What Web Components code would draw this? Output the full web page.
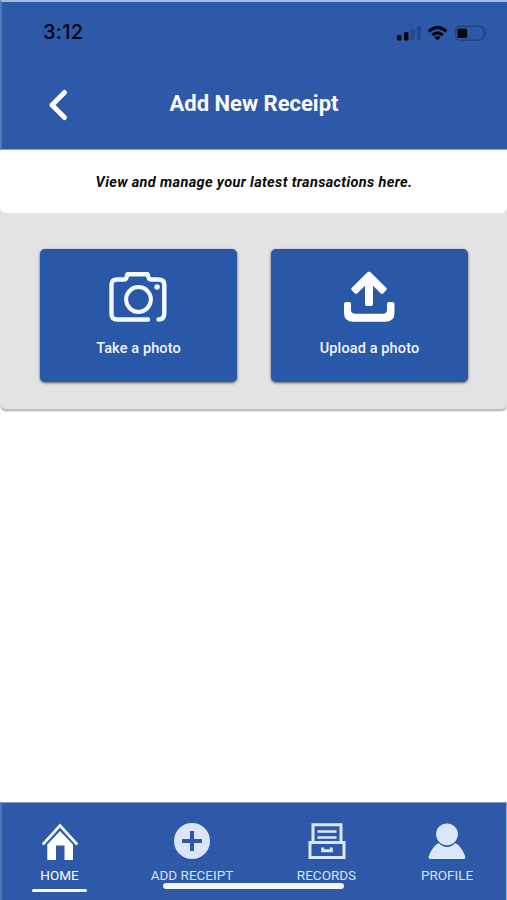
<!DOCTYPE html>
<html lang="en">
<head>
<meta charset="UTF-8">
<meta name="viewport" content="width=device-width, initial-scale=1.0">
<title>Add New Receipt</title>
<style>
  body {
    margin: 0;
    background: white;
    font-family: Roboto, "Liberation Sans", sans-serif;
    --blue: #2e58a8;
    --card-blue: #2a58a9;
  }
</style>
</head>
<body>
<receipt-app></receipt-app>

<script>
class StatusBar extends HTMLElement {
  constructor() {
    super();
    this.attachShadow({mode: 'open'});
    this.shadowRoot.innerHTML = `
      <style>
      :host{
        display:flex;
        justify-content:space-between;
        height:58px;
        box-sizing:border-box;
        padding:18px 19px 0 41px;
        color:#05070e;
      }
      .time{
        font-family:Inter, sans-serif;
        font-size:20px;
        line-height:24px;
        font-weight:500;
        letter-spacing:0.3px;
      }
      svg{
        display:block;
        margin-top:2px;
      }
      </style>
      <span class="time">3:12</span>
      <svg width="94" height="22" viewBox="394 21 94 22">
        <rect x="397" y="34" width="4.500" height="5.500" rx="1.200" fill="#05070e"/>
        <rect x="404" y="31.300" width="4.500" height="8.200" rx="1.200" fill="#05070e"/>
        <rect x="410.500" y="28" width="4" height="11.500" rx="1.200" fill="#254889"/>
        <rect x="417" y="25" width="4" height="14.500" rx="1.200" fill="#254889"/>
        <g fill="none" stroke="#05070e" stroke-width="3">
          <path d="M428.700 30.500Q437.500 22.300 446.300 30.500"/>
          <path d="M432.300 34.200Q437.500 29.600 442.700 34.200"/>
        </g>
        <path d="M434.300 36.300Q437.500 33.700 440.700 36.300L437.500 39.500Z" fill="#05070e"/>
        <rect x="455.700" y="25.200" width="28" height="14" rx="4" fill="none" stroke="#25437f" stroke-width="1.500"/>
        <path d="M485.500 29.500q2.500 2.600 0 5.200z" fill="#25437f"/>
        <rect x="457.500" y="27.500" width="9.700" height="9.500" rx="1.500" fill="#05070e"/>
      </svg>
    `;
  }
}
customElements.define('status-bar', StatusBar);

class PageHeader extends HTMLElement {
  constructor() {
    super();
    this.attachShadow({mode: 'open'});
    this.shadowRoot.innerHTML = `
      <style>
      :host{
        display:block;
        height:150px;
        box-sizing:border-box;
        background:var(--blue);
        border-top:2px solid #a3bbe1;
        border-left:2px solid #5379bb;
        border-bottom:1px solid #8aa6d5;
      }
      .bar{
        display:grid;
        grid-template-columns:112px 1fr 112px;
        align-items:center;
        height:88px;
      }
      svg{
        display:block;
        margin-left:44px;
        margin-top:2px;
      }
      h1{
        margin:0;
        padding-right:1px;
        color:#fafcff;
        font-size:22px;
        font-weight:700;
        line-height:28px;
        text-align:center;
        white-space:nowrap;
      }
      </style>
      <status-bar></status-bar>
      <div class="bar">
        <svg width="24" height="36" viewBox="0 0 24 36">
          <path d="M18.500 5.500L6 18L18.500 30.500" fill="none" stroke="#fff" stroke-width="5" stroke-linecap="round" stroke-linejoin="round"/>
        </svg>
        <h1><slot></slot></h1>
      </div>
    `;
  }
}
customElements.define('page-header', PageHeader);

class IntroText extends HTMLElement {
  constructor() {
    super();
    this.attachShadow({mode: 'open'});
    this.shadowRoot.innerHTML = `
      <style>
      :host{
        display:block;
        background:#e3e3e3;
      }
      p{
        margin:0;
        height:63px;
        box-sizing:border-box;
        padding:23px 0 0 1px;
        background:white;
        border-radius:0 0 6px 6px;
        color:#0a0a0a;
        font-size:14.500px;
        font-style:italic;
        font-weight:700;
        line-height:20px;
        letter-spacing:0.350px;
        text-align:center;
      }
      </style>
      <p><slot></slot></p>
    `;
  }
}
customElements.define('intro-text', IntroText);

class ActionCard extends HTMLElement {
  constructor() {
    super();
    this.attachShadow({mode: 'open'});
    this.shadowRoot.innerHTML = `
      <style>
      :host{
        display:flex;
        flex-direction:column;
        align-items:center;
        width:197px;
        height:133px;
        box-sizing:border-box;
        padding-top:20px;
        background:var(--card-blue);
        border-radius:5px;
        box-shadow:0 1px 3px rgba(0,0,0,0.6);
        color:#f1f6ff;
        font-size:14.500px;
        font-weight:500;
        line-height:20px;
        letter-spacing:0.120px;
      }
      ::slotted(svg){
        display:block;
        margin-right:2px;
        margin-bottom:14px;
      }
      </style>
      <slot name="icon"></slot>
      <span><slot></slot></span>
    `;
  }
}
customElements.define('action-card', ActionCard);

class ActionPanel extends HTMLElement {
  constructor() {
    super();
    this.attachShadow({mode: 'open'});
    this.shadowRoot.innerHTML = `
      <style>
      :host{
        display:flex;
        gap:34px;
        height:198px;
        box-sizing:border-box;
        padding:36px 39px 0 40px;
        background:#e3e3e3;
        border-bottom:2px solid #bdbdbd;
        border-radius:0 0 6px 6px;
        box-shadow:0 1px 2px rgba(0,0,0,0.12);
      }
      </style>
      <slot></slot>
    `;
  }
}
customElements.define('action-panel', ActionPanel);

class TabItem extends HTMLElement {
  constructor() {
    super();
    this.attachShadow({mode: 'open'});
    this.shadowRoot.innerHTML = `
      <style>
      :host{
        display:flex;
        flex-direction:column;
        align-items:center;
        color:#d5e2f8;
        font-size:13.500px;
        line-height:16px;
        white-space:nowrap;
      }
      :host([active]){
        color:white;
      }
      ::slotted(svg){
        display:block;
        margin-bottom:5px;
      }
      .line{
        width:55px;
        height:3px;
        margin-top:6px;
        border-radius:2px;
      }
      :host([active]) .line{
        background:#f7f9fd;
      }
      </style>
      <slot name="icon"></slot>
      <span><slot></slot></span>
      <div class="line"></div>
    `;
  }
}
customElements.define('tab-item', TabItem);

class TabBar extends HTMLElement {
  constructor() {
    super();
    this.attachShadow({mode: 'open'});
    this.shadowRoot.innerHTML = `
      <style>
      :host{
        position:relative;
        display:grid;
        grid-template-columns:115px 150px 119px 122px;
        height:98px;
        box-sizing:border-box;
        padding-top:19px;
        background:var(--blue);
        border-top:1px solid #829fce;
        border-left:2px solid #4e74b7;
        border-right:1px solid #94add7;
      }
      /* home indicator lies over the labels */
      .indicator{
        position:absolute;
        left:161px;
        bottom:11px;
        width:181px;
        height:6px;
        border-radius:3px;
        background:#f5f5f7;
      }
      </style>
      <slot></slot>
      <div class="indicator"></div>
    `;
  }
}
customElements.define('tab-bar', TabBar);

class ReceiptApp extends HTMLElement {
  constructor() {
    super();
    this.attachShadow({mode: 'open'});
    this.shadowRoot.innerHTML = `
      <style>
      :host{
        display:flex;
        flex-direction:column;
        width:507px;
        height:900px;
        overflow:hidden;
      }
      main{
        flex:1;
      }
      </style>
      <page-header>Add New Receipt</page-header>
      <main>
        <intro-text>View and manage your latest transactions here.</intro-text>
        <action-panel>
          <action-card>
            <svg slot="icon" width="60" height="56" viewBox="0 0 60 56" fill="none" stroke="#f4f8ff" stroke-width="4.400" stroke-linecap="round" stroke-linejoin="round">
              <path d="M40 50.500H9Q3.500 50.500 3.500 45V15.500Q3.500 10.500 9 10.500H16Q18 10.500 18.500 8.500L19.400 5.200H39.600L40.500 8.500Q41 10.500 43 10.500H50Q56.300 10.500 56.300 15.500V44Q56.300 50.500 50.500 50.500"/>
              <circle cx="30.500" cy="30.500" r="12.400" stroke-width="4"/>
              <circle cx="49.100" cy="18" r="2.700" fill="#f4f8ff" stroke="none"/>
            </svg>
            Take a photo
          </action-card>
          <action-card>
            <svg slot="icon" width="60" height="56" viewBox="0 0 60 56" fill="#fff">
              <path d="M27.700 3.900Q30 1.600 32.300 3.900L47.200 18.700Q48.500 20 47.200 21.300L44.200 24.300Q42.900 25.600 41.600 24.300L34 16.700V35Q34 37 32 37H28Q26 37 26 35V16.700L18.400 24.300Q17.100 25.600 15.800 24.300L12.800 21.300Q11.500 20 12.800 18.700Z"/>
              <path d="M5 35Q5 33 7 33H10Q12 33 12 35V40.500Q12 44.800 16.300 44.800H43.700Q48 44.800 48 40.500V35Q48 33 50 33H53.500Q55.500 33 55.500 35V43.500Q55.500 52.700 47 52.700H13.500Q5 52.700 5 43.500Z"/>
            </svg>
            Upload a photo
          </action-card>
        </action-panel>
      </main>
      <tab-bar>
        <tab-item active>
          <svg slot="icon" width="40" height="40" viewBox="0 0 40 40">
            <path d="M2.800 22.500L20 3.500L37.200 22.500" fill="none" stroke="#f5f9ff" stroke-width="2.700"/>
            <path d="M20 9L33 22.500V38H24.500V23.500H16V38H7.300V22.500Z" fill="#fff"/>
          </svg>
          HOME
        </tab-item>
        <tab-item>
          <svg slot="icon" width="40" height="40" viewBox="0 0 40 40">
            <circle cx="20" cy="19" r="18" fill="#dbe5f7"/>
            <path d="M20 9V29M10 19H30" stroke="#2e58a8" stroke-width="4"/>
          </svg>
          ADD RECEIPT
        </tab-item>
        <tab-item>
          <svg slot="icon" width="40" height="40" viewBox="0 0 40 40" fill="none" stroke="#dbe7fc" stroke-width="3">
            <path d="M6 20V2.700H34V20M3 20.500H37V35.500H3Z"/>
            <path d="M10.500 9.500H29.500M10.500 15.500H29.500" stroke-width="2.500"/>
            <path d="M15.700 25.500V28.700H24.300V25.500"/>
          </svg>
          RECORDS
        </tab-item>
        <tab-item>
          <svg slot="icon" width="40" height="40" viewBox="0 0 40 40" fill="#dbe6f8">
            <path d="M12 21C14 23.500 17 25 20 25S26 23.500 28 21C33 23 37 30 38.300 35Q38.700 37 37 37H3Q1.300 37 1.700 35C3 30 7 23 12 21Z"/>
            <circle cx="20" cy="12.300" r="11.900" fill="#2e58a8"/>
            <circle cx="20" cy="12.300" r="10.900"/>
          </svg>
          PROFILE
        </tab-item>
      </tab-bar>
    `;
  }
}
customElements.define('receipt-app', ReceiptApp);
</script>
</body>
</html>
